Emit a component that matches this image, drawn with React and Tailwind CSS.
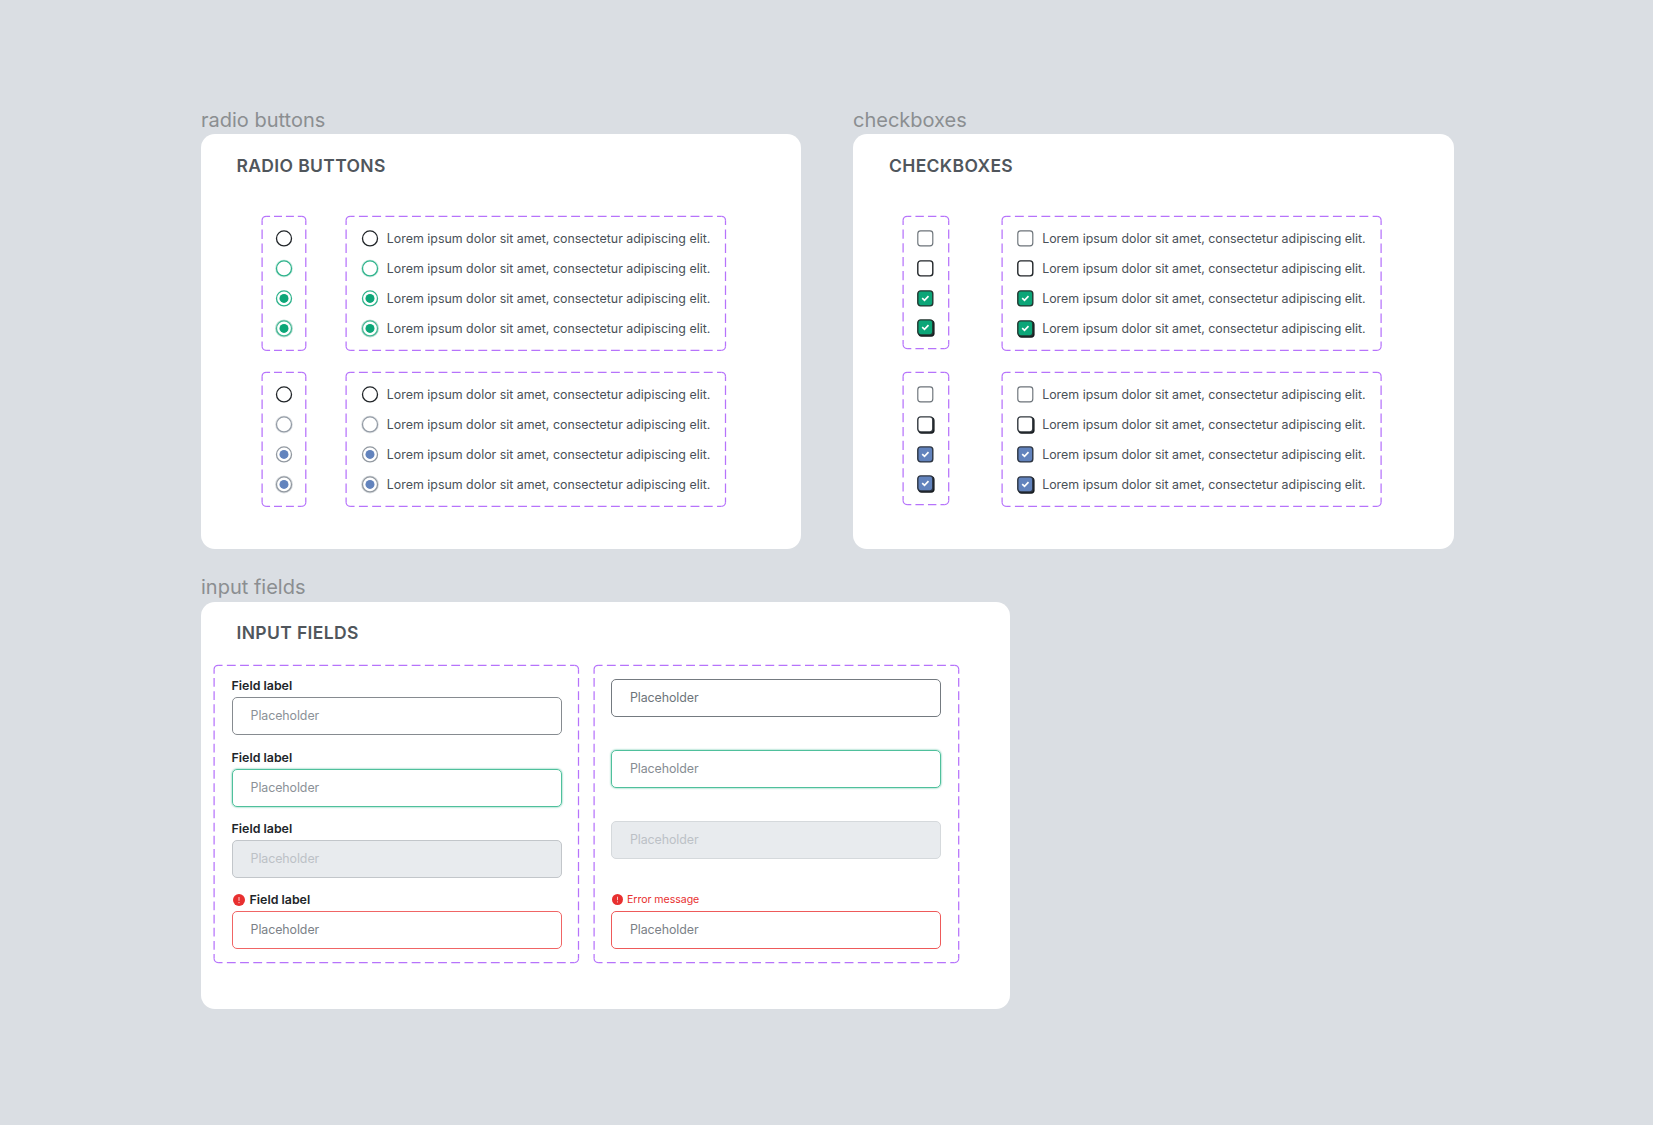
const LOREM = 'Lorem ipsum dolor sit amet, consectetur adipiscing elit.';

/* Dashed frame: solid rounded corners, every side divided evenly into dashes. */
function DashedFrame({ w, h, children, className = '' }) {
  const r = 4;
  const nx = Math.round((w - 2 * r) / 13.33);
  const ny = Math.round((h - 2 * r) / 13.33);
  const dash = { strokeDasharray: '0.67 0.33', strokeDashoffset: 0.335 };
  return (
    <div className={`relative shrink-0 ${className}`} style={{ width: w, height: h }}>
      <svg
        className="pointer-events-none absolute top-0 left-0 overflow-visible"
        width={w}
        height={h}
        fill="none"
        stroke="#b673fb"
        strokeWidth="1.25"
      >
        <g transform="translate(0.1 0.3)">
          <path d={`M${r} 0H${w - r}`} pathLength={nx} {...dash} />
          <path d={`M${r} ${h}H${w - r}`} pathLength={nx} {...dash} />
          <path d={`M0 ${r}V${h - r}`} pathLength={ny} {...dash} />
          <path d={`M${w} ${r}V${h - r}`} pathLength={ny} {...dash} />
          <path
            d={`M0 ${r}A${r} ${r} 0 0 1 ${r} 0M${w - r} 0A${r} ${r} 0 0 1 ${w} ${r}M${w} ${h - r}A${r} ${r} 0 0 1 ${w - r} ${h}M${r} ${h}A${r} ${r} 0 0 1 0 ${h - r}`}
          />
        </g>
      </svg>
      {children}
    </div>
  );
}

function Radio({ ring, dot, halo }) {
  return (
    <svg className="size-4 shrink-0 overflow-visible" viewBox="0 -0.4 16 16" fill="none">
      {halo && <circle cx="8" cy="8" r="8" stroke={halo} strokeWidth="2" />}
      <circle cx="8" cy="8" r="7.5" fill="#fff" stroke={ring} strokeWidth="1.3" />
      {dot && <circle cx="8" cy="8" r="4.5" fill={dot} />}
    </svg>
  );
}

function Checkbox({ border, fill, shadow, thick }) {
  return (
    <svg className="size-4 shrink-0 overflow-visible" viewBox="-0.2 -0.3 16 16" fill="none">
      {shadow && <rect x="1" y="1" width="16.4" height="16.4" rx="3.4" fill="#15191d" />}
      <rect x="0.6" y="0.6" width="15" height="15" rx="2.8" fill={fill || '#fff'} stroke={border} strokeWidth={thick ? 1.4 : 1.15} />
      {fill && <path d="M5 7.9L7.3 10L11.3 5.9" stroke="#fff" strokeWidth="1.7" />}
    </svg>
  );
}

const GREEN = '#0ca678';
const BLUE = '#6283bd';

const RADIOS = [
  [
    { ring: '#212529' },
    { ring: '#2fb38c', halo: '#d5efe6' },
    { ring: '#2fb38c', dot: GREEN },
    { ring: '#45b896', dot: GREEN, halo: '#bfdfd4' },
  ],
  [
    { ring: '#212529' },
    { ring: '#949ca6', halo: '#e6e8ea' },
    { ring: '#9299a1', dot: BLUE },
    { ring: '#9299a1', dot: BLUE, halo: '#dcdfe2' },
  ],
];

const CHECKS = [
  [
    { border: '#6c7379' },
    { border: '#212529', thick: true },
    { border: '#20352f', fill: GREEN, thick: true },
    { border: '#20352f', fill: GREEN, thick: true, shadow: true },
  ],
  [
    { border: '#6c7379' },
    { border: '#32383e', thick: true, shadow: true },
    { border: '#2b3340', fill: BLUE, thick: true },
    { border: '#2b3340', fill: BLUE, thick: true, shadow: true },
  ],
];

function Row({ children, text }) {
  return (
    <div className="flex h-[30.2px] items-center">
      {children}
      {text && (
        <span className="ml-[8.9px] pt-[1.6px] text-[12.4px] leading-5 whitespace-nowrap text-[#495057]">{LOREM}</span>
      )}
    </div>
  );
}

function Section({ label, children }) {
  return (
    <section className="shrink-0">
      <div className="h-[25.7px] text-[20px] leading-[25px] text-[#8b8e91]">{label}</div>
      {children}
    </section>
  );
}

function Title({ children }) {
  return <h2 className="text-[17.5px] leading-[26px] font-semibold tracking-[0.36px] text-[#50565c]">{children}</h2>;
}

function ErrorIcon({ size }) {
  return (
    <svg className="shrink-0" width={size} height={size} viewBox="0 0 12 12">
      <circle cx="6" cy="6" r="6" fill="#e83030" />
      <path d="M6 3V6.8M6 8V9.2" stroke="#fff" strokeOpacity="0.8" strokeWidth="1" />
    </svg>
  );
}

function Input({ tone }) {
  return (
    <div className={`flex h-[38px] w-[330px] items-center rounded-[5px] border pl-[18px] text-[12.4px] leading-5 tracking-[-0.08px] ${tone}`}>
      Placeholder
    </div>
  );
}

function FieldLabel() {
  return <span className="text-[12.4px] leading-5 font-semibold text-[#212529]">Field label</span>;
}

const LEFT_TONES = [
  'border-[#868b90] text-[#8b9197]',
  'border-[#4fc09c] text-[#8b9197] shadow-[0_0_2px_#0ca678cc]',
  'border-[#c2c6ca] bg-[#e8ebee] text-[#bcc1c6]',
  'border-[#f06565] text-[#7b8187]',
];

const RIGHT_TONES = [
  'border-[#747a80] text-[#6d747a]',
  'border-[#4fc09c] text-[#868c92] shadow-[0_0_2px_#0ca678cc]',
  'border-[#d5d9dc] bg-[#e8ebee] text-[#bcc1c6]',
];

export default function App() {
  return (
    <main className="h-[1125px] w-[1653px] overflow-hidden bg-[#dadee3] pt-[108px] pl-[201px] font-[Inter,sans-serif]">
      <div className="flex gap-[52px]">
        <Section label="radio buttons">
          <div className="h-[415.6px] w-[600px] rounded-[14px] bg-white pt-[19.3px]">
            <div className="pl-[35.5px]">
              <Title>RADIO BUTTONS</Title>
            </div>
            <div className="mt-[37.3px] ml-[61.3px] flex flex-col gap-[22px]">
              {RADIOS.map((group, g) => (
                <div key={g} className="flex gap-[40.3px]">
                  <DashedFrame w={43.7} h={134} className="pt-[6.4px] pl-[13.9px]">
                    {group.map((radio, i) => (
                      <Row key={i}>
                        <Radio {...radio} />
                      </Row>
                    ))}
                  </DashedFrame>
                  <DashedFrame w={379.4} h={134} className="pt-[6.4px] pl-[15.7px]">
                    {group.map((radio, i) => (
                      <Row key={i} text>
                        <Radio {...radio} />
                      </Row>
                    ))}
                  </DashedFrame>
                </div>
              ))}
            </div>
          </div>
        </Section>

        <Section label="checkboxes">
          <div className="h-[415.6px] w-[601px] rounded-[14px] bg-white pt-[19.3px]">
            <div className="pl-9">
              <Title>CHECKBOXES</Title>
            </div>
            <div className="mt-[37.3px] ml-[50.4px] flex flex-col gap-[22px]">
              {CHECKS.map((group, g) => (
                <div key={g} className="flex items-start gap-[53px]">
                  <DashedFrame w={45.6} h={132.3} className="pt-[6.4px] pl-[13.8px]">
                    {group.map((check, i) => (
                      <div key={i} className="last:-mt-[1.6px]">
                        <Row>
                          <Checkbox {...check} />
                        </Row>
                      </div>
                    ))}
                  </DashedFrame>
                  <DashedFrame w={379} h={134} className="pt-[6.4px] pl-[15.3px]">
                    {group.map((check, i) => (
                      <Row key={i} text>
                        <Checkbox {...check} />
                      </Row>
                    ))}
                  </DashedFrame>
                </div>
              ))}
            </div>
          </div>
        </Section>
      </div>

      <div className="mt-[26px] flex">
        <Section label="input fields">
          <div className="mt-[0.7px] h-[407.5px] w-[809.3px] rounded-[14px] bg-white pt-[18.2px]">
            <div className="pl-[35.5px]">
              <Title>INPUT FIELDS</Title>
            </div>
            <div className="mt-[19.2px] ml-[13.2px] flex gap-[15px]">
              <DashedFrame w={364.4} h={297.2} className="pt-[12.4px] pl-[17.4px]">
                {LEFT_TONES.map((tone, i) => (
                  <div key={i} className="h-[71.1px]">
                    <div className="flex h-5 items-center gap-[5px] pb-[2px]">
                      {i === 3 && (
                        <span className="pl-px">
                          <ErrorIcon size={12} />
                        </span>
                      )}
                      <FieldLabel />
                    </div>
                    <Input tone={tone} />
                  </div>
                ))}
              </DashedFrame>
              <DashedFrame w={364.6} h={297.2} className="pt-[13.5px] pl-[17.4px]">
                {RIGHT_TONES.map((tone, i) => (
                  <div key={i} className="h-[71.1px]">
                    <Input tone={tone} />
                  </div>
                ))}
                <div>
                  <div className="flex h-[19.2px] items-center gap-1 pb-[3.4px] pl-px text-[10.6px] leading-4 tracking-[-0.05px] text-[#e83030]">
                    <ErrorIcon size={11} />
                    Error message
                  </div>
                  <Input tone="border-[#ee5a5a] text-[#7b8187]" />
                </div>
              </DashedFrame>
            </div>
          </div>
        </Section>
      </div>
    </main>
  );
}
